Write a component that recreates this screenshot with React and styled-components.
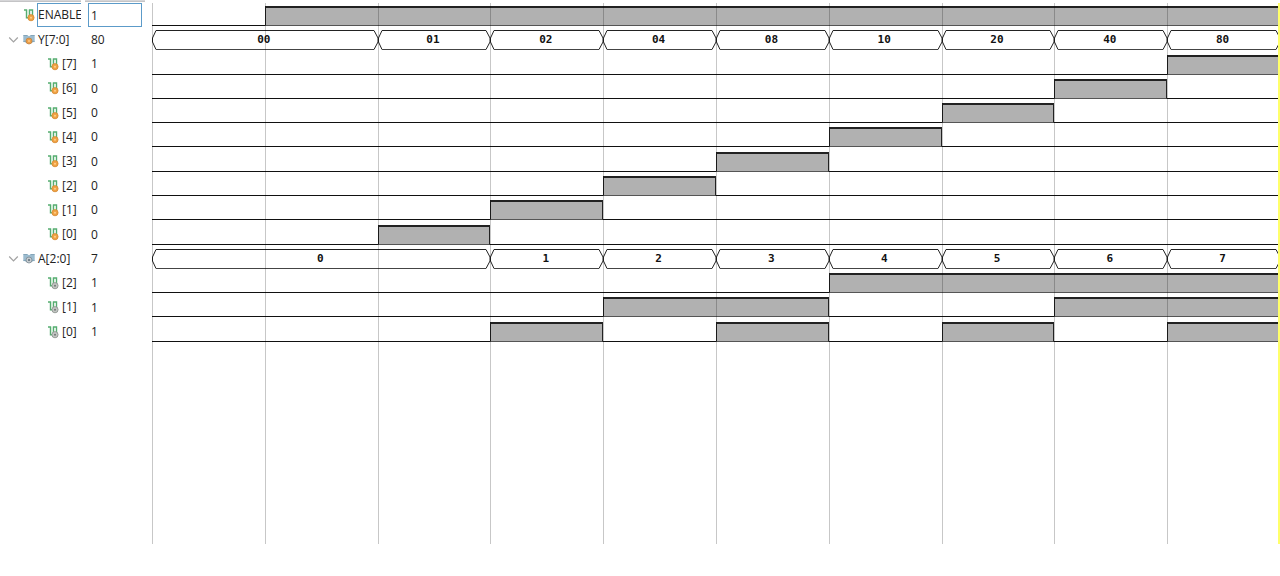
import React from "react";
import styled, { createGlobalStyle, css } from "styled-components";

const GlobalStyle = createGlobalStyle`
  *, *::before, *::after { box-sizing: border-box; }
  body {
    margin: 0;
    background: #fff;
    color: #222;
    font-family: "Open Sans", "Noto Sans", sans-serif;
    font-size: 12px;
  }
`;

const Viewer = styled.main`
  display: grid;
  grid-template-columns: 81px 4px 60px 7px minmax(0, 1fr);
  min-height: 544px;
  overflow: hidden;
`;

const Panel = styled.section`
  display: grid;
  grid-template-rows: 2px 1px 341px;
  align-content: start;
  overflow: hidden;
`;

const HeaderEdge = styled.div`
  background: #d6d6d8;
  border-bottom: 1px solid #c4c4c6;
`;

const Rows = styled.div`
  grid-row: 3;
  display: grid;
  grid-template-rows: repeat(14, 1fr);
`;

const NameRow = styled.div`
  display: flex;
  align-items: center;
  padding-left: ${(p) => (p.$depth ? 47 : 8)}px;
  min-width: 0;
`;

const Toggle = styled.button`
  display: flex;
  align-items: center;
  width: 11px;
  height: 16px;
  margin-right: 4px;
  padding: 0;
  border: 0;
  background: none;
`;

const ToggleSpace = styled.span`
  width: 15px;
  flex: none;
`;

const IconBox = styled.svg`
  flex: none;
  width: 12px;
  height: 14px;
  margin-right: 2px;
`;

const selection = css`
  border: 1px solid #5c9bc9;
  background: #fff;
`;

const Name = styled.span`
  display: flex;
  align-items: center;
  flex: none;
  width: 64px;
  height: 24px;
  border: 1px solid transparent;
  line-height: 24px;
  ${(p) => p.$selected && selection}
`;

const Value = styled.div`
  display: flex;
  align-items: center;
  height: 24px;
  margin: 0 3px;
  padding-left: 2px;
  border: 1px solid transparent;
  ${(p) => p.$selected && selection}
`;

const Waves = styled.section`
  grid-column: 5;
  display: grid;
  grid-template-rows: 3px 340px;
  align-content: start;
  position: relative;
`;

const WaveRows = styled(Rows)`
  grid-row: 2;
`;

const WaveRow = styled.div`
  display: grid;
  grid-template-columns: repeat(10, minmax(0, 1fr));
  height: 20px;
  margin-top: 3px;
`;

const Level = styled.div`
  grid-column: span ${(p) => p.$span};
  border-bottom: 1px solid #111;
  ${(p) =>
    p.$high &&
    css`
      background: #b1b1b1;
      border-top: 2px solid #222;
      border-left: 1px solid #222;
      border-right: ${p.$last ? 0 : 1}px solid #222;
      border-bottom-color: #555;
    `}
`;

const BusSegment = styled.div`
  grid-column: span ${(p) => p.$span};
  display: flex;
  min-width: 0;
`;

const BusBody = styled.div`
  flex: 1;
  display: flex;
  align-items: center;
  justify-content: center;
  padding-right: 2px;
  border-top: 1px solid #222;
  border-bottom: 1px solid #444;
  color: #111;
  font: bold 11px/18px "DejaVu Sans Mono", monospace;
`;

const Cap = styled.svg`
  flex: none;
  width: 4px;
  height: 20px;
  overflow: visible;
`;

const Overlay = styled.div`
  position: absolute;
  inset: 3px 0 0 0;
  display: grid;
  grid-template-columns: repeat(10, minmax(0, 1fr));
  pointer-events: none;
`;

const GridLine = styled.div`
  border-left: 1px solid rgba(0, 0, 0, 0.22);
`;

const Cursor = styled.div`
  position: absolute;
  inset: 0 0 0 auto;
  width: 2px;
  background: #ffff6a;
`;

function BitIcon({ output }) {
  return (
    <IconBox viewBox="0 0 12 14" aria-hidden="true">
      <path d="M1 2H3.5V9.7H6.5V2H9.5V8" fill="none" stroke="#55ad70" strokeWidth="1.4" />
      <path d="M5 2V9" stroke="#c5e6cc" strokeWidth="1" />
      <circle cx="8" cy="9.7" r="3.1" fill={output ? "#f0a244" : "#c3c6c3"} stroke={output ? "#d58b35" : "#8a908c"} strokeWidth=".8" />
      <circle cx="8" cy="9.7" r="1" fill={output ? "#ffd08a" : "#737977"} />
    </IconBox>
  );
}

function BusIcon({ output }) {
  return (
    <IconBox viewBox="0 0 12 14" aria-hidden="true">
      <path d="M.3 2H4.5L5.5 3H6.5L7.5 2H11.7V9H10L9 10H3L2 9H.3Z" fill="#9cbccf" />
      <path d="M.5 2.5H4.2M7.8 2.5H11.5M.5 8.6H3M9 8.6H11.5" stroke="#7d9fb4" strokeWidth=".8" />
      <circle cx="6" cy="8" r="3" fill={output ? "#ed9e45" : "#c5cbcf"} stroke={output ? "#bf8446" : "#7c8a94"} strokeWidth=".8" />
      <circle cx="6" cy="8" r="1" fill={output ? "#ffc985" : "#596a75"} />
    </IconBox>
  );
}

function Chevron() {
  return (
    <svg width="11" height="8" viewBox="0 0 11 8" aria-hidden="true">
      <path d="M1.2 1.5L5.5 6L9.8 1.5" fill="none" stroke="#a2a2a2" strokeWidth="1.2" />
    </svg>
  );
}

const oneHot = (bit) => [[bit + 2, 0], [1, 1], [7 - bit, 0]].filter(([span]) => span > 0);

const signals = [
  { name: "ENABLE", value: "1", output: true, selected: true, levels: [[1, 0], [9, 1]] },
  {
    name: "Y[7:0]", value: "80", output: true,
    bus: [[2, "00"], [1, "01"], [1, "02"], [1, "04"], [1, "08"], [1, "10"], [1, "20"], [1, "40"], [1, "80"]],
  },
  ...[7, 6, 5, 4, 3, 2, 1, 0].map((bit) => ({
    name: `[${bit}]`, value: bit === 7 ? "1" : "0", output: true, depth: 1, levels: oneHot(bit),
  })),
  {
    name: "A[2:0]", value: "7",
    bus: [[3, "0"], [1, "1"], [1, "2"], [1, "3"], [1, "4"], [1, "5"], [1, "6"], [1, "7"]],
  },
  { name: "[2]", value: "1", depth: 1, levels: [[6, 0], [4, 1]] },
  { name: "[1]", value: "1", depth: 1, levels: [[4, 0], [2, 1], [2, 0], [2, 1]] },
  { name: "[0]", value: "1", depth: 1, levels: [[3, 0], [1, 1], [1, 0], [1, 1], [1, 0], [1, 1], [1, 0], [1, 1]] },
];

function SignalName({ signal }) {
  return (
    <NameRow $depth={signal.depth}>
      {signal.bus && (
        <Toggle type="button" aria-label={`Collapse ${signal.name}`} aria-expanded="true">
          <Chevron />
        </Toggle>
      )}
      {!signal.bus && !signal.depth && <ToggleSpace />}
      {signal.bus ? <BusIcon output={signal.output} /> : <BitIcon output={signal.output} />}
      <Name $selected={signal.selected}>{signal.name}</Name>
    </NameRow>
  );
}

function SignalWave({ signal }) {
  if (signal.bus) {
    return (
      <WaveRow>
        {signal.bus.map(([span, text]) => (
          <BusSegment key={text} $span={span}>
            <Cap viewBox="0 0 4 20" aria-hidden="true">
              <path d="M4 .5L.5 8V12L4 19.5" fill="none" stroke="#222" />
            </Cap>
            <BusBody>{text}</BusBody>
            <Cap viewBox="0 0 4 20" aria-hidden="true">
              <path d="M0 .5L4 8V12L0 19.5" fill="none" stroke="#222" />
            </Cap>
          </BusSegment>
        ))}
      </WaveRow>
    );
  }
  return (
    <WaveRow>
      {signal.levels.map(([span, high], i) => (
        <Level key={i} $span={span} $high={high} $last={i === signal.levels.length - 1} />
      ))}
    </WaveRow>
  );
}

export default function App() {
  return (
    <>
      <GlobalStyle />
      <Viewer>
        <Panel aria-label="Signal names">
          <HeaderEdge />
          <Rows>
            {signals.map((s, i) => <SignalName key={i} signal={s} />)}
          </Rows>
        </Panel>
        <span />
        <Panel aria-label="Signal values">
          <HeaderEdge />
          <Rows>
            {signals.map((s, i) => <Value key={i} $selected={s.selected}>{s.value}</Value>)}
          </Rows>
        </Panel>
        <Waves aria-label="Waveforms">
          <WaveRows>
            {signals.map((s, i) => <SignalWave key={i} signal={s} />)}
          </WaveRows>
          <Overlay>
            {Array.from({ length: 10 }, (_, i) => <GridLine key={i} />)}
            <Cursor />
          </Overlay>
        </Waves>
      </Viewer>
    </>
  );
}
